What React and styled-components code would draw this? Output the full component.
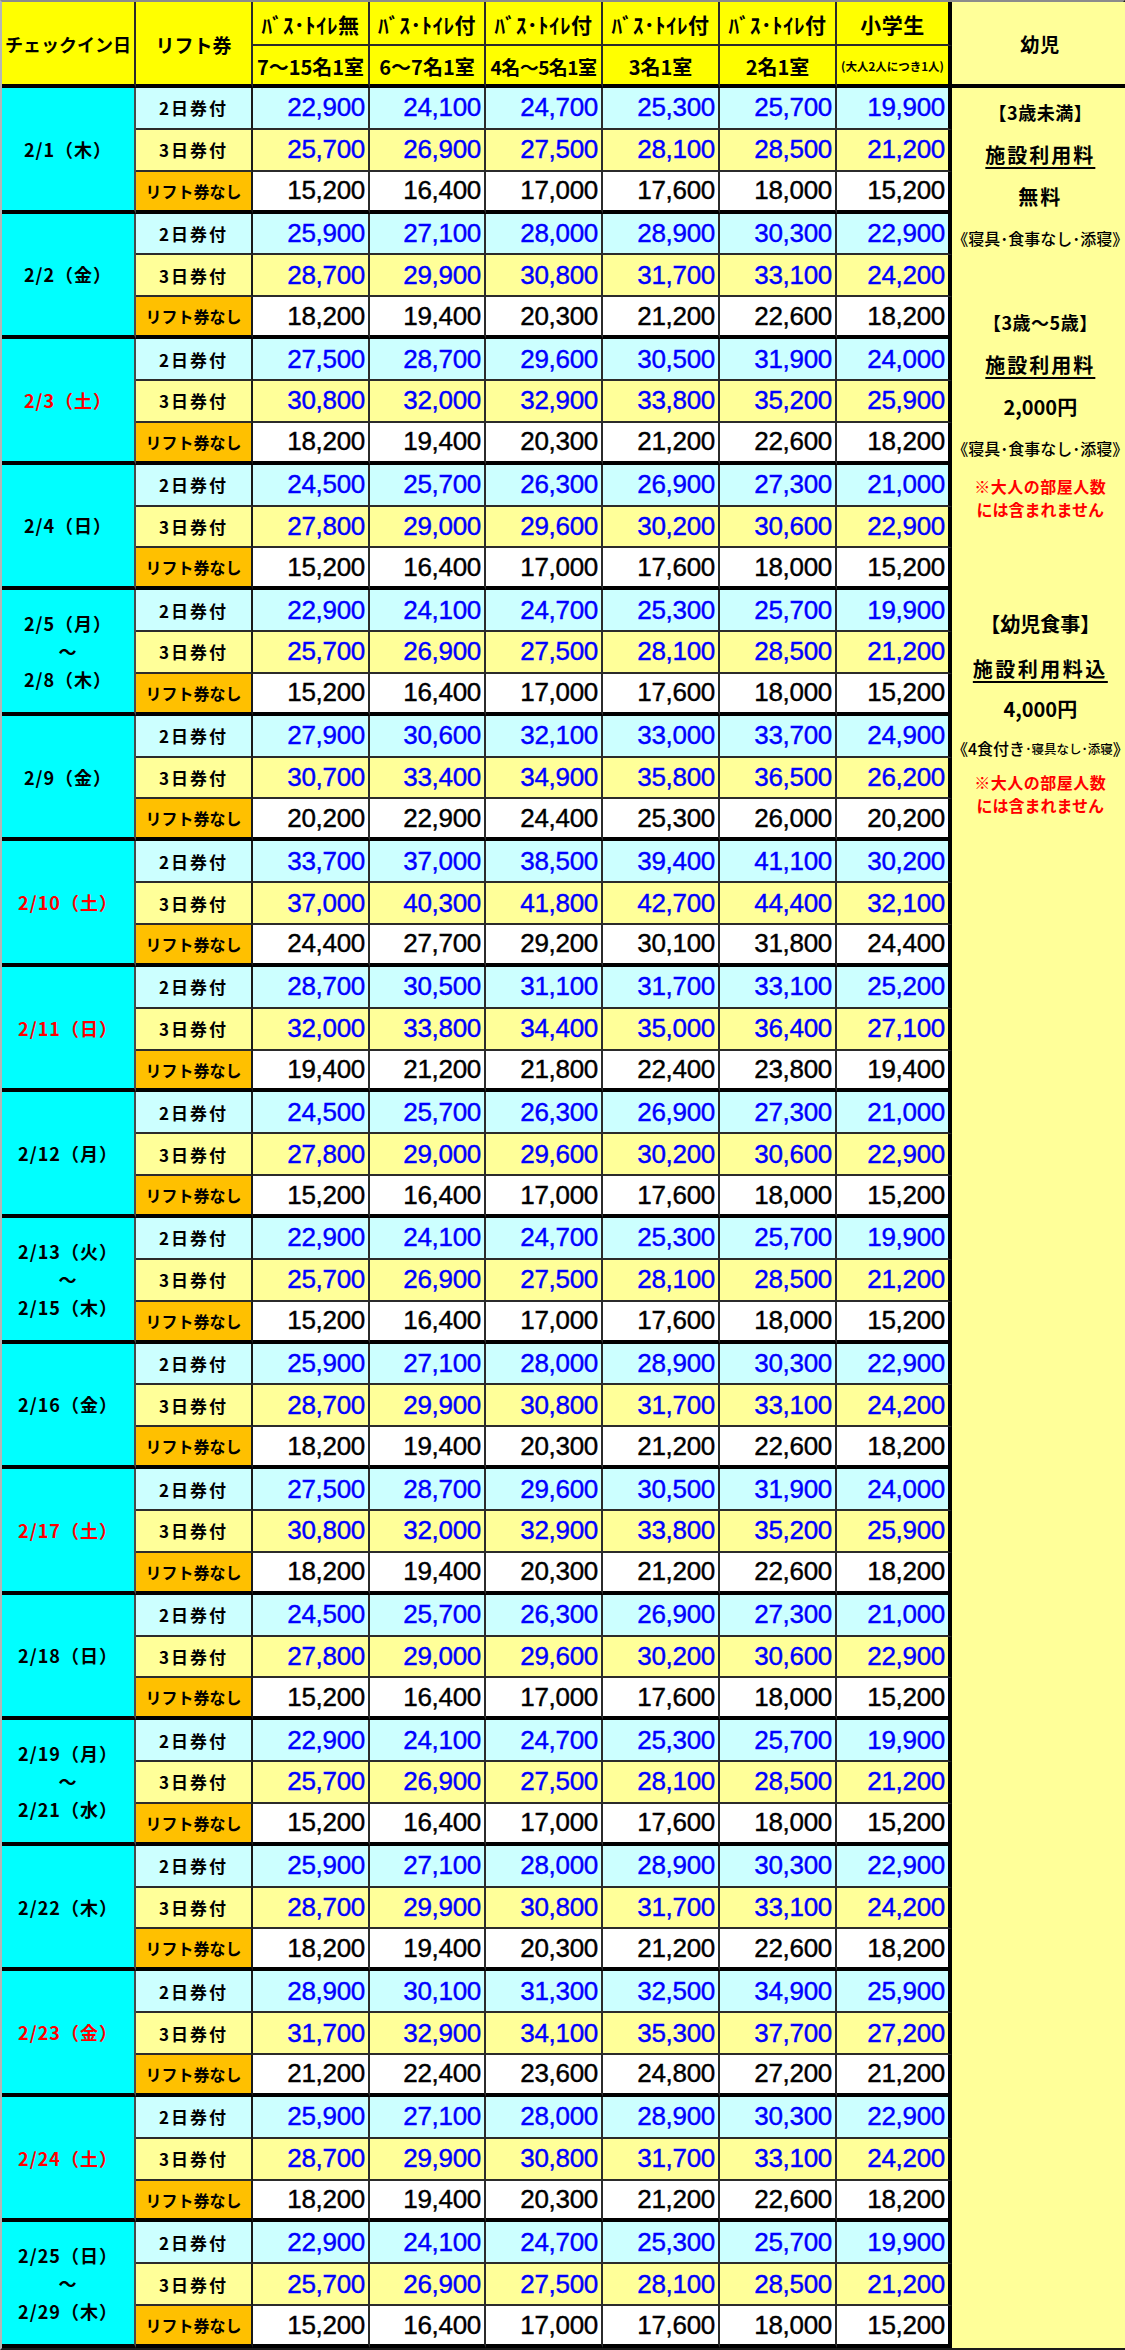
import React from "react";
import styled, { createGlobalStyle } from "styled-components";

const GlobalStyle = createGlobalStyle`
  html, body {
    margin: 0;
    padding: 0;
    background: #fff;
  }
  body {
    font-family: "Noto Sans CJK JP", sans-serif;
    text-spacing-trim: space-all;
  }
`;

// price sets that repeat across the month
const P1 = [
  ["22,900", "24,100", "24,700", "25,300", "25,700", "19,900"],
  ["25,700", "26,900", "27,500", "28,100", "28,500", "21,200"],
  ["15,200", "16,400", "17,000", "17,600", "18,000", "15,200"],
];
const P2 = [
  ["25,900", "27,100", "28,000", "28,900", "30,300", "22,900"],
  ["28,700", "29,900", "30,800", "31,700", "33,100", "24,200"],
  ["18,200", "19,400", "20,300", "21,200", "22,600", "18,200"],
];
const P3 = [
  ["27,500", "28,700", "29,600", "30,500", "31,900", "24,000"],
  ["30,800", "32,000", "32,900", "33,800", "35,200", "25,900"],
  ["18,200", "19,400", "20,300", "21,200", "22,600", "18,200"],
];
const P4 = [
  ["24,500", "25,700", "26,300", "26,900", "27,300", "21,000"],
  ["27,800", "29,000", "29,600", "30,200", "30,600", "22,900"],
  ["15,200", "16,400", "17,000", "17,600", "18,000", "15,200"],
];

const groups = [
  { dates: ["2/1（木）"], prices: P1 },
  { dates: ["2/2（金）"], prices: P2 },
  { dates: ["2/3（土）"], prices: P3, red: true },
  { dates: ["2/4（日）"], prices: P4 },
  { dates: ["2/5（月）", "〜", "2/8（木）"], prices: P1 },
  {
    dates: ["2/9（金）"],
    prices: [
      ["27,900", "30,600", "32,100", "33,000", "33,700", "24,900"],
      ["30,700", "33,400", "34,900", "35,800", "36,500", "26,200"],
      ["20,200", "22,900", "24,400", "25,300", "26,000", "20,200"],
    ],
  },
  {
    dates: ["2/10（土）"],
    red: true,
    prices: [
      ["33,700", "37,000", "38,500", "39,400", "41,100", "30,200"],
      ["37,000", "40,300", "41,800", "42,700", "44,400", "32,100"],
      ["24,400", "27,700", "29,200", "30,100", "31,800", "24,400"],
    ],
  },
  {
    dates: ["2/11（日）"],
    red: true,
    prices: [
      ["28,700", "30,500", "31,100", "31,700", "33,100", "25,200"],
      ["32,000", "33,800", "34,400", "35,000", "36,400", "27,100"],
      ["19,400", "21,200", "21,800", "22,400", "23,800", "19,400"],
    ],
  },
  { dates: ["2/12（月）"], prices: P4 },
  { dates: ["2/13（火）", "〜", "2/15（木）"], prices: P1 },
  { dates: ["2/16（金）"], prices: P2 },
  { dates: ["2/17（土）"], prices: P3, red: true },
  { dates: ["2/18（日）"], prices: P4 },
  { dates: ["2/19（月）", "〜", "2/21（水）"], prices: P1 },
  { dates: ["2/22（木）"], prices: P2 },
  {
    dates: ["2/23（金）"],
    red: true,
    prices: [
      ["28,900", "30,100", "31,300", "32,500", "34,900", "25,900"],
      ["31,700", "32,900", "34,100", "35,300", "37,700", "27,200"],
      ["21,200", "22,400", "23,600", "24,800", "27,200", "21,200"],
    ],
  },
  { dates: ["2/24（土）"], prices: P2, red: true },
  { dates: ["2/25（日）", "〜", "2/29（木）"], prices: P1 },
];

const rooms = [
  { top: "ﾊﾞｽ･ﾄｲﾚ無", sub: "7〜15名1室" },
  { top: "ﾊﾞｽ･ﾄｲﾚ付", sub: "6〜7名1室" },
  { top: "ﾊﾞｽ･ﾄｲﾚ付", sub: "4名〜5名1室", tight: true },
  { top: "ﾊﾞｽ･ﾄｲﾚ付", sub: "3名1室" },
  { top: "ﾊﾞｽ･ﾄｲﾚ付", sub: "2名1室" },
  { top: "小学生", sub: "(大人2人につき1人)", small: true },
];

const tiers = [
  { label: "2日券付", tone: "two" },
  { label: "3日券付", tone: "three" },
  { label: "リフト券なし", tone: "none" },
];

const rowBg = { two: "#ccffff", three: "#ffff99", none: "#ffffff" };

export default function App() {
  return (
    <>
      <GlobalStyle />
      <Sheet>
        <HeadCell $rows={2} $bottom>
          チェックイン日
        </HeadCell>
        <HeadCell $rows={2} $bottom $size={19}>
          リフト券
        </HeadCell>
        {rooms.map((r, i) => (
          <HeadCell key={"t" + i} $edge={i === 5} $size={21} $ls={0.5}>
            {r.top}
          </HeadCell>
        ))}
        <InfantHead>幼児</InfantHead>
        {rooms.map((r, i) => (
          <HeadCell
            key={"s" + i}
            $bottom
            $edge={i === 5}
            $size={r.small ? 11.5 : r.tight ? 19 : 20}
            $ls={r.tight ? -0.5 : 0}
          >
            {r.sub}
          </HeadCell>
        ))}

        {groups.map((g, gi) => (
          <React.Fragment key={gi}>
            <DateCell $red={g.red}>
              {g.dates.map((d, di) => (
                <span key={di}>{d}</span>
              ))}
            </DateCell>
            {tiers.map((t, ti) => (
              <React.Fragment key={ti}>
                <LiftCell $tone={t.tone} $last={ti === 2}>
                  {t.label}
                </LiftCell>
                {g.prices[ti].map((p, pi) => (
                  <PriceCell
                    key={pi}
                    $tone={t.tone}
                    $last={ti === 2}
                    $edge={pi === 5}
                  >
                    {p}
                  </PriceCell>
                ))}
                {gi === 0 && ti === 0 && <InfantNotes />}
              </React.Fragment>
            ))}
          </React.Fragment>
        ))}
      </Sheet>
    </>
  );
}

function InfantNotes() {
  return (
    <InfantCell>
      <Line $size={18} $ls={0.5}>
        【3歳未満】
      </Line>
      <Line $size={20} $ls={2} $under>
        施設利用料
      </Line>
      <Line $size={20} $ls={2}>
        無料
      </Line>
      <Line $size={16} $weight={500}>
        《寝具･食事なし･添寝》
      </Line>
      <Line />
      <Line $size={18} $ls={0.5}>
        【3歳〜5歳】
      </Line>
      <Line $size={20} $ls={2} $under>
        施設利用料
      </Line>
      <Line $size={20}>2,000円</Line>
      <Line $size={16} $weight={500}>
        《寝具･食事なし･添寝》
      </Line>
      <Line $h={23} $mt={5} $size={16} $ls={0.5} $red>
        ※大人の部屋人数
      </Line>
      <Line $h={23} $size={16} $red>
        には含まれません
      </Line>
      <Line $mt={82} $size={20}>
        【幼児食事】
      </Line>
      <Line $h={44} $mt={2} $size={20} $ls={2.5} $under>
        施設利用料込
      </Line>
      <Line $h={36} $size={20}>
        4,000円
      </Line>
      <Line $h={44} $size={16} $weight={500}>
        《4食付き<Small>･寝具なし･添寝</Small>》
      </Line>
      <Line $h={23} $size={16} $ls={0.5} $red>
        ※大人の部屋人数
      </Line>
      <Line $h={23} $size={16} $red>
        には含まれません
      </Line>
    </InfantCell>
  );
}

const Sheet = styled.div`
  box-sizing: border-box;
  width: 1125px;
  height: 2350px;
  display: grid;
  grid-template-columns: 134px 117px 117px 116px 117px 117px 117px 115px 1fr;
  grid-template-rows: 44px 42px repeat(54, 1fr);
  border: 2px solid #1a1a1a;
  border-top-color: #8c8c8c;
  border-left-color: #b5b5b5;
`;

const Cell = styled.div`
  box-sizing: border-box;
  min-width: 0;
  min-height: 0;
  display: flex;
  align-items: center;
  justify-content: center;
  white-space: nowrap;
  border-right: 2px solid #2b2b2b;
  border-bottom: 2px solid #2b2b2b;
`;

const HeadCell = styled(Cell)`
  grid-row: span ${(p) => p.$rows || 1};
  background: #ffff00;
  color: #000;
  font-weight: 700;
  font-size: ${(p) => p.$size || 18}px;
  letter-spacing: ${(p) => p.$ls || 0}px;
  border-bottom: ${(p) => (p.$bottom ? "4px solid #000" : "2px solid #2b2b2b")};
  border-right: ${(p) => (p.$edge ? "4px solid #000" : "2px solid #2b2b2b")};
  padding-top: 2px;
`;

const InfantHead = styled(Cell)`
  grid-row: span 2;
  background: #ffff99;
  font-weight: 700;
  font-size: 19px;
  letter-spacing: 1px;
  border-right: none;
  border-bottom: 4px solid #000;
`;

const DateCell = styled(Cell)`
  grid-row: span 3;
  flex-direction: column;
  background: #00ffff;
  color: ${(p) => (p.$red ? "#ff0000" : "#000")};
  font-weight: 700;
  font-size: 18px;
  letter-spacing: 1px;
  line-height: 28px;
  border-right: 2px solid #4a4a4a;
  border-bottom: 4px solid #000;
`;

const LiftCell = styled(Cell)`
  background: ${(p) => (p.$tone === "none" ? "#ffc000" : rowBg[p.$tone])};
  color: #000;
  font-weight: 700;
  font-size: ${(p) => (p.$tone === "none" ? 16 : 17)}px;
  letter-spacing: ${(p) => (p.$tone === "none" ? "0" : "2px")};
  border-bottom: ${(p) => (p.$last ? "4px solid #000" : "2px solid #2b2b2b")};
  border-right-color: #1a1a1a;
`;

const PriceCell = styled(Cell)`
  justify-content: flex-end;
  padding-right: 3px;
  background: ${(p) => rowBg[p.$tone]};
  color: ${(p) => (p.$tone === "none" ? "#000" : "#0000ff")};
  font-family: "Liberation Sans", Arial, sans-serif;
  font-size: 26px;
  letter-spacing: -0.3px;
  -webkit-text-stroke: 0.4px currentColor;
  border-bottom: ${(p) => (p.$last ? "4px solid #000" : "2px solid #2b2b2b")};
  border-right: ${(p) => (p.$edge ? "4px solid #000" : "2px solid #2b2b2b")};
`;

const InfantCell = styled.div`
  grid-row: span 54;
  display: flex;
  flex-direction: column;
  align-items: center;
  padding-top: 3px;
  background: #ffff99;
  min-height: 0;
`;

const Line = styled.div`
  height: ${(p) => p.$h || 42}px;
  margin-top: ${(p) => p.$mt || 0}px;
  display: flex;
  align-items: center;
  justify-content: center;
  white-space: nowrap;
  font-size: ${(p) => p.$size || 18}px;
  font-weight: ${(p) => p.$weight || 700};
  letter-spacing: ${(p) => p.$ls || 0}px;
  color: ${(p) => (p.$red ? "#ff0000" : "#000")};
  text-decoration: ${(p) => (p.$under ? "underline" : "none")};
  text-decoration-thickness: 2px;
  text-underline-offset: 4px;
`;

const Small = styled.span`
  font-size: 12.5px;
`;
